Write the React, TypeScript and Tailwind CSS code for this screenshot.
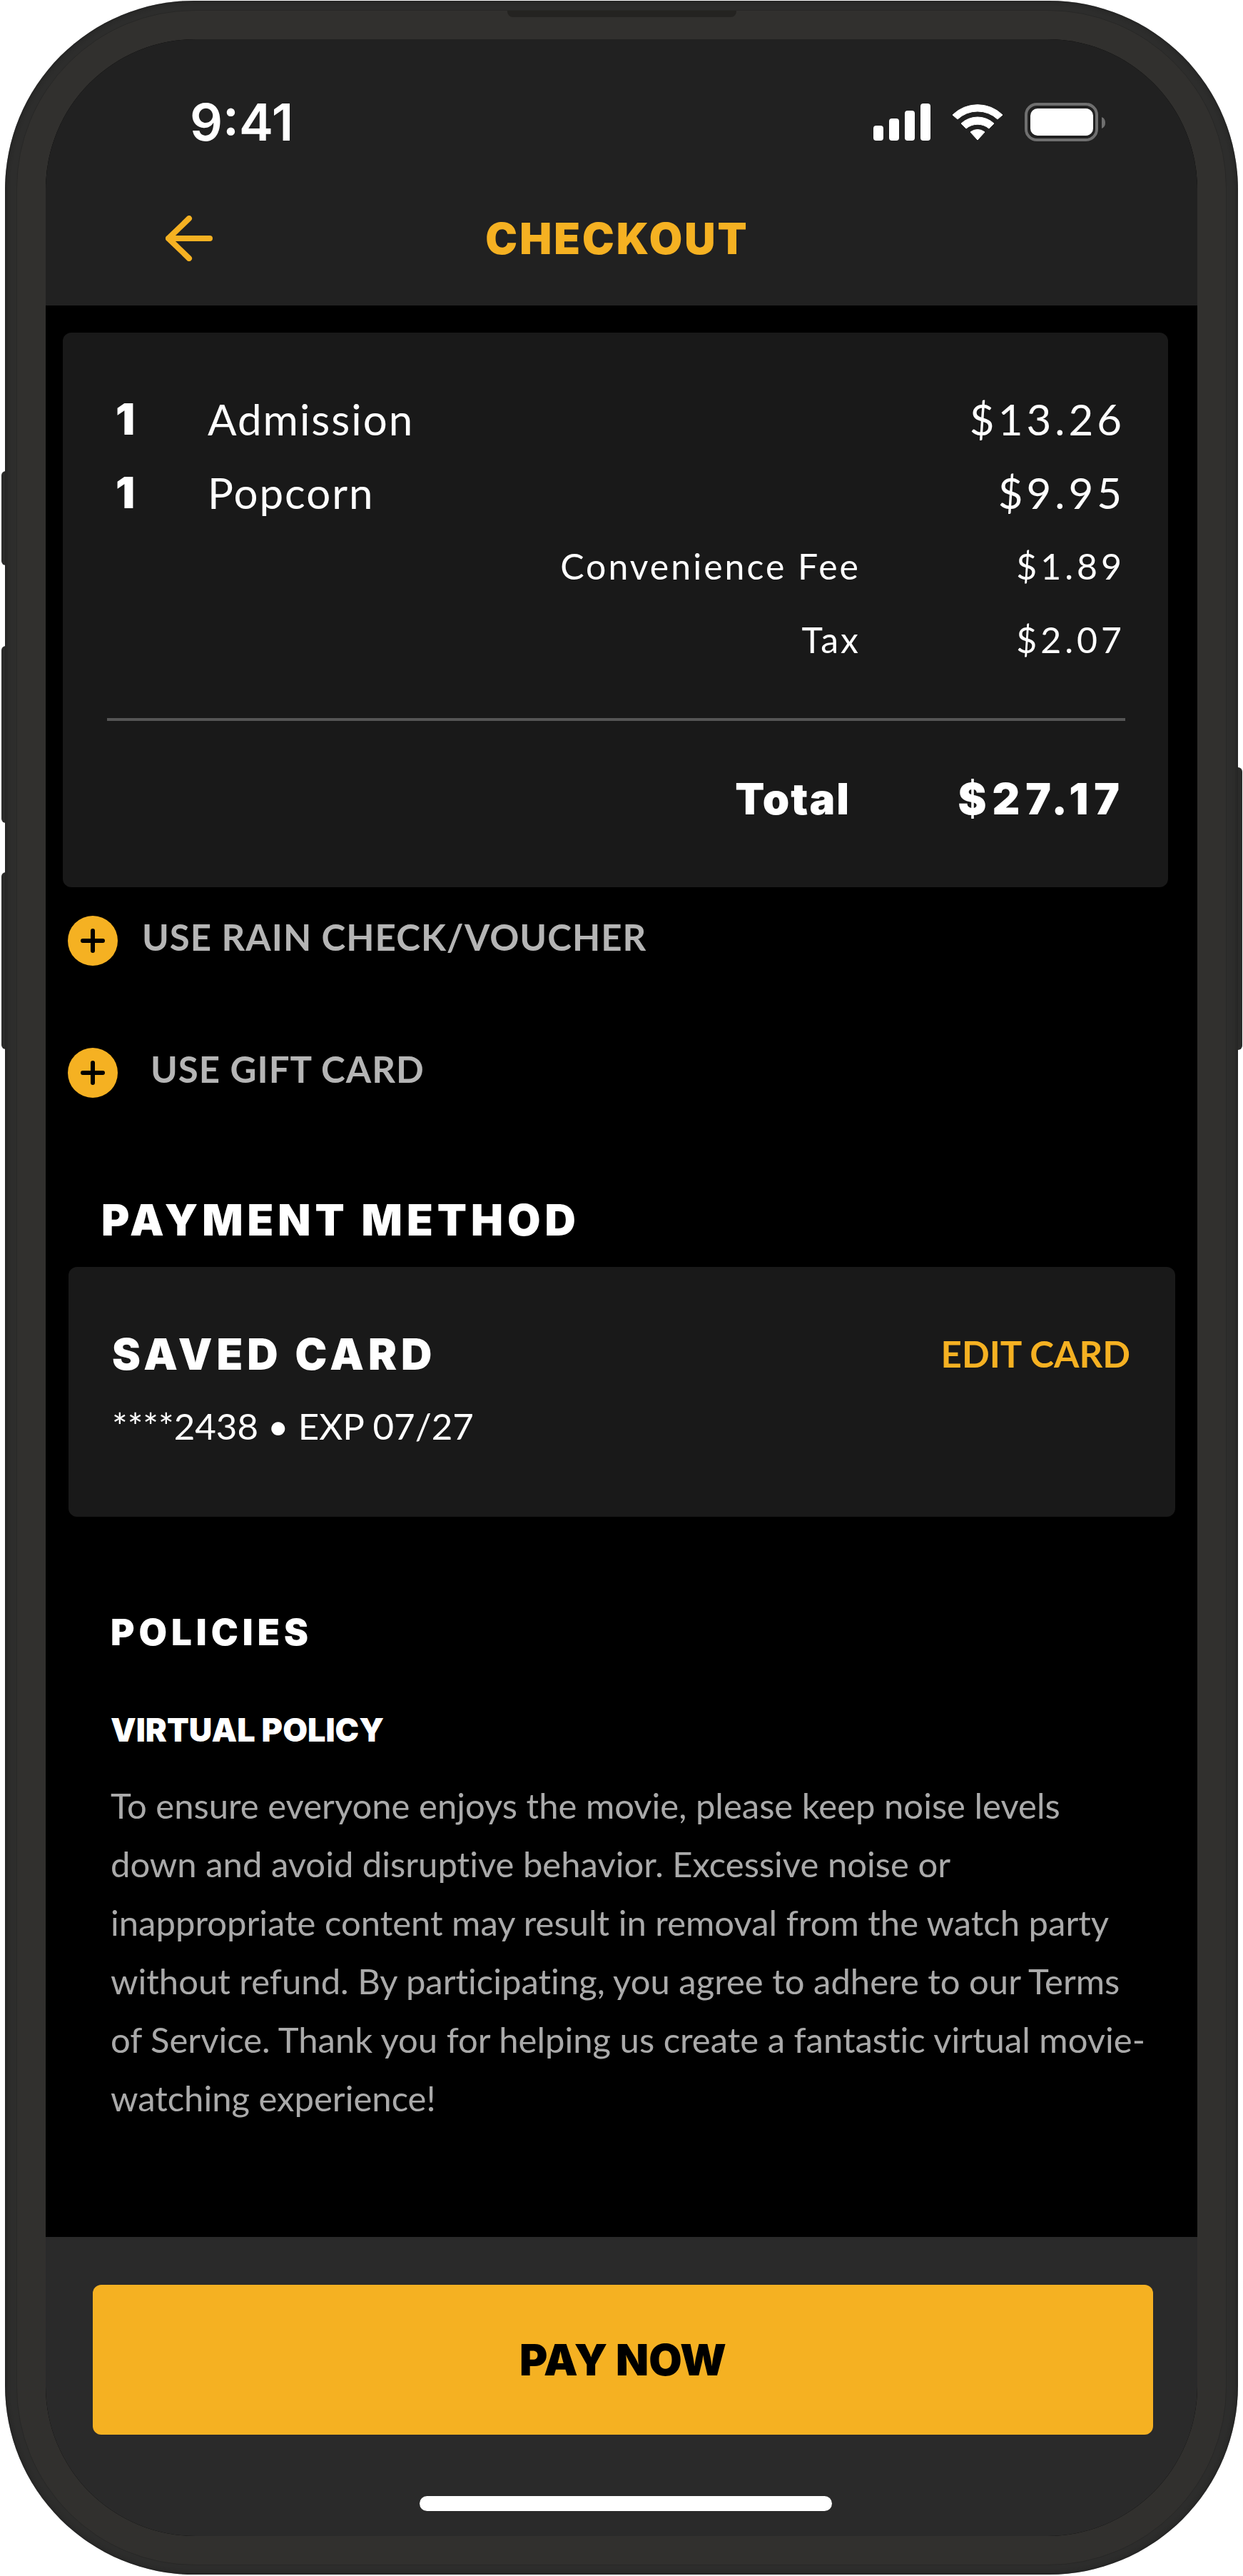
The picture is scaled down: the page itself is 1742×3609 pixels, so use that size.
import React from 'react'

type LineItem = {
  qty: number
  name: string
  price: string
}

type Fee = {
  label: string
  amount: string
}

const ITEMS: LineItem[] = [
  { qty: 1, name: 'Admission', price: '$13.26' },
  { qty: 1, name: 'Popcorn', price: '$9.95' },
]

const FEES: Fee[] = [
  { label: 'Convenience Fee', amount: '$1.89' },
  { label: 'Tax', amount: '$2.07' },
]

const SignalIcon = () => (
  <svg width="80" height="52" viewBox="0 0 80 52" fill="#fff" aria-hidden="true">
    <rect x="0" y="31" width="14" height="21" rx="4" />
    <rect x="22" y="21" width="14" height="31" rx="4" />
    <rect x="44" y="10" width="14" height="42" rx="4" />
    <rect x="66" y="0" width="14" height="52" rx="4" />
  </svg>
)

const WifiIcon = () => (
  <svg
    width="72"
    height="52"
    viewBox="0 0 72 52"
    fill="#fff"
    stroke="#fff"
    strokeWidth="1"
    strokeLinejoin="round"
    aria-hidden="true"
  >
    <path d="M1 16A50 50 0 0 1 71 16L64 22A41 41 0 0 0 8 22Z" />
    <path d="M13 28A34 34 0 0 1 59 28L52 35A25 25 0 0 0 20 35Z" />
    <path d="M26 40A16 16 0 0 1 46 40L36 51Z" />
  </svg>
)

const BatteryIcon = () => (
  <svg width="113" height="54" viewBox="0 0 113 54" fill="none" aria-hidden="true">
    <rect x="2" y="2" width="99" height="50" rx="15" stroke="#6f6f6f" strokeWidth="4" />
    <rect x="8" y="8" width="88" height="38" rx="10" fill="#fff" />
    <path d="M108 20Q113 22 113 28T108 36Z" fill="#6f6f6f" />
  </svg>
)

const BackIcon = () => (
  <svg
    width="66"
    height="64"
    viewBox="0 0 66 64"
    fill="none"
    stroke="#f5b122"
    strokeWidth="8"
    strokeLinecap="round"
    strokeLinejoin="round"
    aria-hidden="true"
  >
    <path d="M62 32H4M33 4L4 32L33 60" />
  </svg>
)

const PlusIcon = () => (
  <svg width="70" height="70" viewBox="0 0 70 70" aria-hidden="true">
    <circle cx="35" cy="35" r="35" fill="#f5b122" />
    <path d="M21 35H49M35 21V49" stroke="#000" strokeWidth="6" strokeLinecap="round" />
  </svg>
)

const Header = () => (
  <header className="bg-[#212121] h-[373px]">
    <div className="flex items-center justify-between pt-[76px] pl-[202px] pr-[129px]">
      <p className="font-['Inter'] font-semibold text-[72px] leading-[80px] text-white">
        9:41
      </p>
      <div className="flex items-center gap-[30px]">
        <SignalIcon />
        <WifiIcon />
        <BatteryIcon />
      </div>
    </div>
    <div className="grid grid-cols-[1fr_auto_1fr] items-center pt-[83px] pl-[168px] pr-[180px]">
      <button type="button" aria-label="Back" className="justify-self-start">
        <BackIcon />
      </button>
      <h1 className="font-['Inter'] font-black text-[60px] leading-[80px] tracking-[3px] text-[#f5b122]">
        CHECKOUT
      </h1>
    </div>
  </header>
)

const OrderSummary = () => (
  <section className="bg-[#191919] rounded-[12px] ml-[24px] mr-[41px] pt-[70px] pb-[72px] pl-[62px] pr-[60px]">
    <table className="w-full table-fixed text-left text-[60px] leading-[103px] tracking-[2px]">
      <colgroup>
        <col className="w-[141px]" />
        <col />
        <col className="w-[371px]" />
      </colgroup>
      <tbody>
        {ITEMS.map((item) => (
          <tr key={item.name}>
            <td className="pl-[12px] font-['Inter'] font-black">{item.qty}</td>
            <td>{item.name}</td>
            <td className="text-right tracking-[5px]">{item.price}</td>
          </tr>
        ))}
        {FEES.map((fee) => (
          <tr key={fee.label} className="text-[50px]">
            <td colSpan={2} className="text-right tracking-[3px]">
              {fee.label}
            </td>
            <td className="text-right tracking-[5px]">{fee.amount}</td>
          </tr>
        ))}
      </tbody>
      <tfoot>
        <tr>
          <td colSpan={3} className="pt-[58px] pb-[58px]">
            <div className="h-[4px] bg-[#555555]" />
          </td>
        </tr>
        <tr className="font-['Inter'] font-black">
          <td colSpan={2} className="text-right pr-[14px]">
            Total
          </td>
          <td className="text-right tracking-[8px]">$27.17</td>
        </tr>
      </tfoot>
    </table>
  </section>
)

const SavedCard = () => (
  <div className="bg-[#191919] rounded-[12px] ml-[32px] mr-[31px] mt-[36px] pt-[92px] pb-[97px] pl-[61px] pr-[63px]">
    <div className="flex items-center justify-between">
      <h3 className="font-['Inter'] font-black text-[60px] leading-[60px] tracking-[6px]">
        SAVED CARD
      </h3>
      <button
        type="button"
        className="font-bold text-[51px] leading-[60px] text-[#f5b122]"
      >
        EDIT CARD
      </button>
    </div>
    <p className="mt-[41px] text-[51px] leading-[60px]">****2438 • EXP 07/27</p>
  </div>
)

const Policies = () => (
  <section className="mt-[132px] pl-[91px] pr-[60px] pb-[154px]">
    <h2 className="font-['Inter'] font-black text-[51px] leading-[60px] tracking-[6px]">
      POLICIES
    </h2>
    <h3 className="mt-[77px] font-['Inter'] font-black text-[45px] leading-[60px]">
      VIRTUAL POLICY
    </h3>
    <p className="mt-[34px] text-[49px] leading-[82px] text-[#aaaaaa] whitespace-nowrap [font-variant-ligatures:none]">
      To ensure everyone enjoys the movie, please keep noise levels
      <br />
      down and avoid disruptive behavior. Excessive noise or
      <br />
      inappropriate content may result in removal from the watch party
      <br />
      without refund. By participating, you agree to adhere to our Terms
      <br />
      of Service. Thank you for helping us create a fantastic virtual movie-
      <br />
      watching experience!
    </p>
  </section>
)

const Footer = () => (
  <footer className="bg-[#2a2a2a] pt-[67px] pb-[35px] pl-[66px] pr-[62px]">
    <button
      type="button"
      className="block w-full h-[210px] rounded-[12px] bg-[#f5b122] font-['Inter'] font-black text-[60px] text-black"
    >
      PAY NOW
    </button>
    <div className="flex justify-center pt-[86px] pl-[8px]">
      <div className="h-[21px] w-[578px] rounded-full bg-white" />
    </div>
  </footer>
)

const App = () => {
  return (
    <div className="relative bg-white px-[7px] pt-px pb-[2px] font-['Lato','Liberation_Sans',sans-serif]">
      {/* hardware keys */}
      <div className="absolute left-[2px] top-[660px] h-[132px] w-[10px] rounded-l-[6px] bg-[#2b2b2a]" />
      <div className="absolute left-[2px] top-[905px] h-[248px] w-[10px] rounded-l-[6px] bg-[#2b2b2a]" />
      <div className="absolute left-[2px] top-[1222px] h-[248px] w-[10px] rounded-l-[6px] bg-[#2b2b2a]" />
      <div className="absolute right-[1px] top-[1075px] h-[396px] w-[10px] rounded-r-[6px] bg-[#2b2b2a]" />

      <div className="relative rounded-[265px] bg-[#2d2d2c] px-[16px] py-[13px] shadow-[inset_0_0_6px_#1c1c1c]">
        <div className="relative rounded-[250px] border border-[#282827] bg-[#31302e] p-[40px]">
          <div className="absolute inset-x-0 top-0 mx-auto h-[9px] w-[321px] rounded-b-[8px] bg-[#242321]" />
          <div className="overflow-hidden rounded-[210px] bg-black text-white">
            <Header />
            <main className="pt-[38px]">
              <OrderSummary />
              <div className="flex flex-col items-start gap-[115px] pt-[40px] pl-[31px] font-bold text-[51px] leading-[60px] tracking-[1px] text-[#b5b5b5]">
                <button type="button" className="flex items-start gap-[34px]">
                  <PlusIcon />
                  USE RAIN CHECK/VOUCHER
                </button>
                <button type="button" className="flex items-start gap-[46px]">
                  <PlusIcon />
                  USE GIFT CARD
                </button>
              </div>
              <section className="mt-[141px]">
                <h2 className="pl-[78px] font-['Inter'] font-black text-[60px] leading-[60px] tracking-[6px]">
                  PAYMENT METHOD
                </h2>
                <SavedCard />
              </section>
              <Policies />
            </main>
            <Footer />
          </div>
        </div>
      </div>
    </div>
  )
}

export default App
